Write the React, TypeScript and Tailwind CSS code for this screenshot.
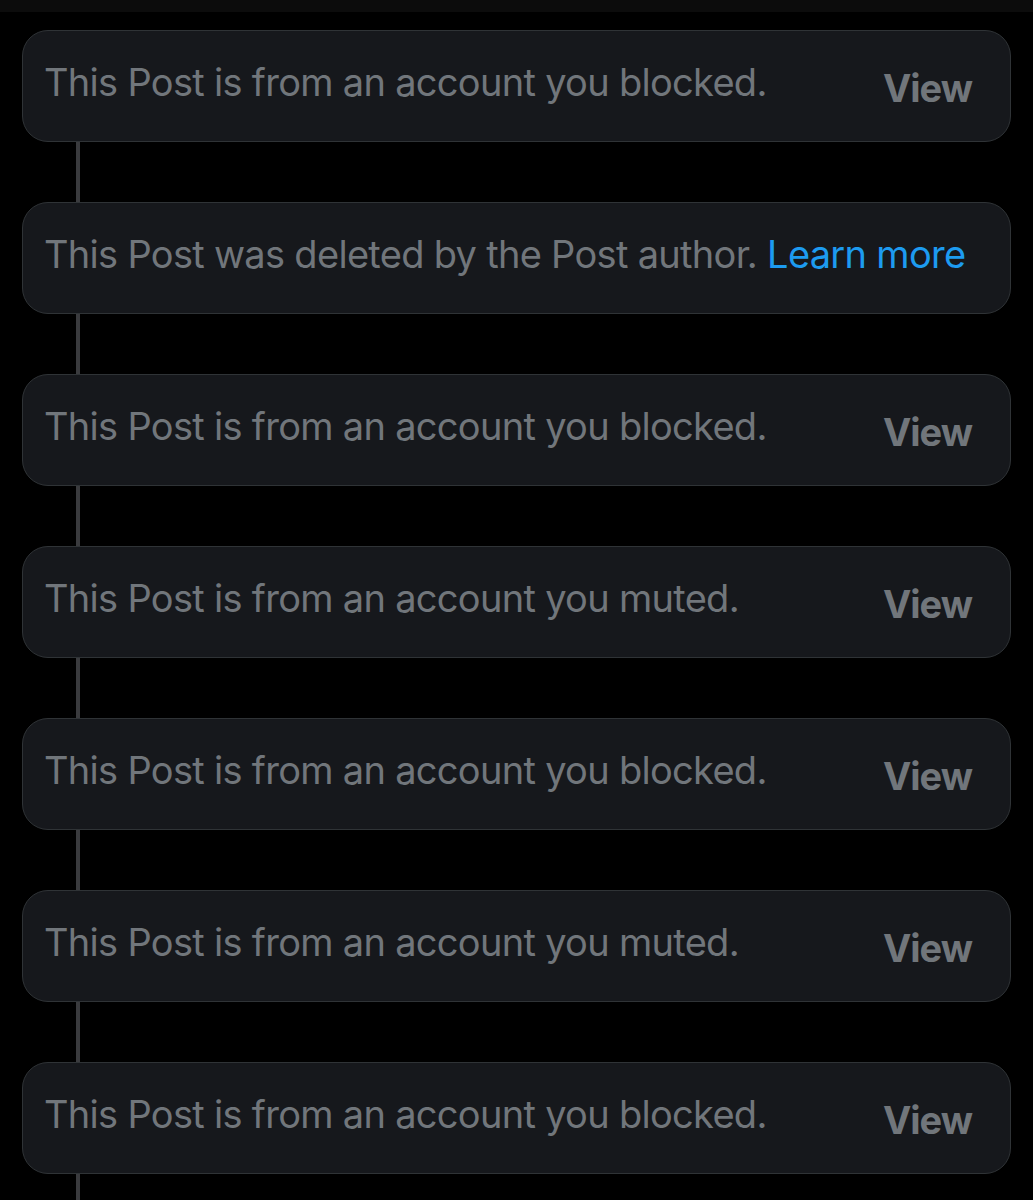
const posts = [
  { text: "This Post is from an account you blocked.", action: "view" },
  { text: "This Post was deleted by the Post author.", action: "learn" },
  { text: "This Post is from an account you blocked.", action: "view" },
  { text: "This Post is from an account you muted.", action: "view" },
  { text: "This Post is from an account you blocked.", action: "view" },
  { text: "This Post is from an account you muted.", action: "view" },
  { text: "This Post is from an account you blocked.", action: "view" },
];

function TombstoneCard({ text, action }: { text: string; action: string }) {
  return (
    <div className="flex h-[112px] items-start justify-between rounded-[26px] border border-[#2f3336] bg-[#16181c] pl-[21px] pr-[38px]">
      <p className="whitespace-nowrap pt-[28px] text-[38px] leading-[46px] tracking-[-0.7px] text-[#71767b]">
        {text}
        {action === "learn" && <span className="text-[#1d9bf0]"> Learn more</span>}
      </p>
      {action === "view" && (
        <span className="pt-[34px] text-[38px] font-bold leading-[46px] tracking-[-1px] text-[#71767b]">View</span>
      )}
    </div>
  );
}

export default function App() {
  return (
    <div className="min-h-[1200px] bg-black font-['Inter',sans-serif]">
      <div className="h-[12px] bg-[#0c0c0c]" />
      <div className="flex flex-col px-[22px] pt-[18px]">
        {posts.map((p, i) => (
          <div key={i} className="flex flex-col">
            <TombstoneCard text={p.text} action={p.action} />
            <div className="ml-[54px] h-[60px] w-[4px] bg-[#3a3b3e]" />
          </div>
        ))}
      </div>
    </div>
  );
}
